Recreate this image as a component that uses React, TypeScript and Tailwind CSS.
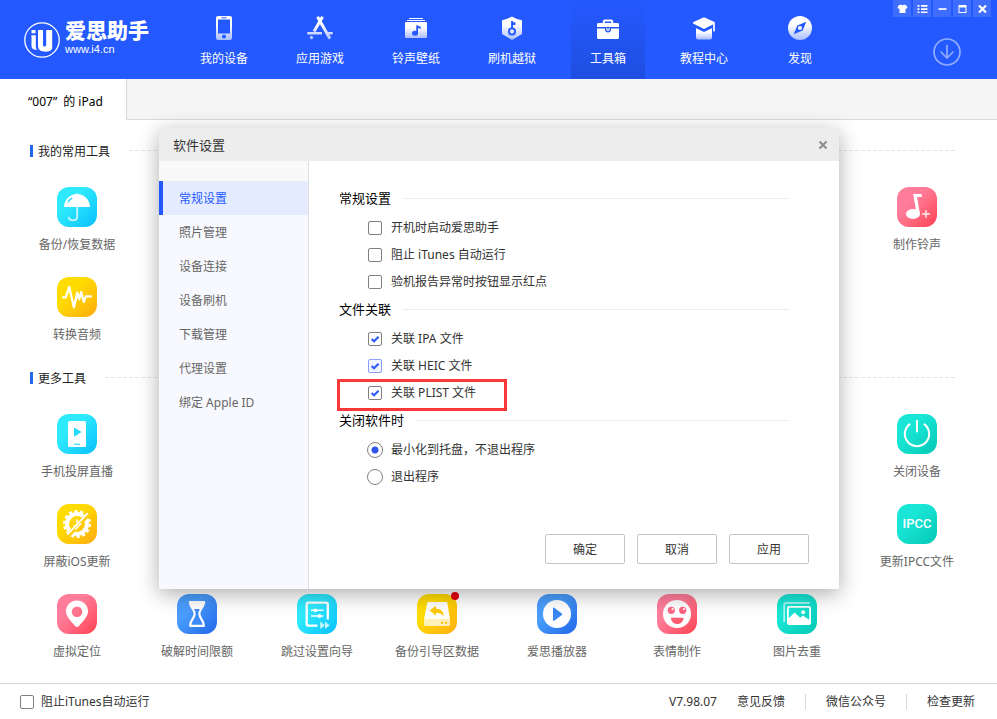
import type { InputHTMLAttributes, ReactNode } from "react";
import { clsx } from "clsx";

const BLUE = "#2459ff";

/* ---------- top navigation icons ---------- */

function NavGradient({ id }: { id: string }) {
  return (
    <defs>
      <linearGradient id={id} x1="0" y1="0" x2="0" y2="1">
        <stop offset="0.35" stopColor="#fff" />
        <stop offset="1" stopColor="#a9bdff" />
      </linearGradient>
    </defs>
  );
}

function DeviceIcon() {
  return (
    <svg width="16" height="24" viewBox="0 0 16 24">
      <NavGradient id="nav-device" />
      <rect width="16" height="24" rx="2" fill="url(#nav-device)" />
      <rect x="2" y="3.5" width="12" height="14" fill={BLUE} />
      <rect x="5.5" y="1.3" width="5" height="1" fill={BLUE} />
      <circle cx="8" cy="20.5" r="2" fill={BLUE} />
    </svg>
  );
}

function AppsIcon() {
  return (
    <svg width="26" height="24" viewBox="0 0 26 24" fill="none">
      <defs>
        <linearGradient id="nav-apps" gradientUnits="userSpaceOnUse" x1="0" y1="0" x2="0" y2="24">
          <stop offset="0.35" stopColor="#fff" />
          <stop offset="1" stopColor="#a9bdff" />
        </linearGradient>
      </defs>
      <g stroke="url(#nav-apps)" strokeWidth="3">
        <path d="M10.5 0.8 23 22.8" />
        <path d="M15.6 0.8 7 15.6" />
        <path d="M0.3 17.300H15M19.500 17.300h6.200" strokeWidth="2.600" />
        <path d="M5.200 20.300 3.700 22.800" />
      </g>
    </svg>
  );
}

function RingtoneNavIcon() {
  return (
    <svg width="22" height="24" viewBox="0 0 22 24">
      <NavGradient id="nav-ring" />
      <path d="M4 2h14v1H4zM2 4h18v1H2z" fill="#fff" />
      <rect y="6" width="22" height="16" rx="1" fill="url(#nav-ring)" />
      <ellipse cx="10" cy="17.2" rx="3" ry="2.5" fill={BLUE} />
      <path d="M11.3 9.2h1.6c.3 1 1.4 1.2 2.9 1.3v2.2c-1.3 0-2.2-.2-2.8-.7v5.2h-1.7z" fill={BLUE} />
    </svg>
  );
}

function FlashIcon() {
  return (
    <svg width="20" height="24" viewBox="0 0 20 24">
      <NavGradient id="nav-flash" />
      <path
        d="M10 .5c3 1.8 6 3 9.2 3.6.5.1.8.5.8 1v12.2c0 .6-.3 1-.8 1.300L10 23.900.8 18.600c-.5-.3-.8-.7-.8-1.300V5.100c0-.5.3-.9.8-1C4 3.500 7 2.300 10 .5z"
        fill="url(#nav-flash)"
      />
      <circle cx="10" cy="15.500" r="3.100" fill="none" stroke={BLUE} strokeWidth="1.900" />
      <path d="M9.100 5h1.900v1.200h2.400v2.700h-2.400V12H9.100z" fill={BLUE} />
    </svg>
  );
}

function ToolboxIcon() {
  return (
    <svg width="22" height="24" viewBox="0 0 22 24">
      <path d="M6.800 7.200V5.600c0-.7.5-1.200 1.200-1.200h6c.7 0 1.200.5 1.200 1.200v1.600" fill="none" stroke="#fff" strokeWidth="2" />
      <path d="M1.500 7h19c.8 0 1.500.7 1.500 1.500V11H0V8.500C0 7.700.7 7 1.500 7z" fill="#fff" />
      <path d="M0 12.600h8v1.200c0 1.500 1.300 2.700 3 2.700s3-1.200 3-2.700v-1.200h8v8.900c0 .8-.7 1.500-1.500 1.500h-19C.7 23 0 22.300 0 21.500z" fill="#fff" />
      <path d="M9.300 12h3.400v1.600c0 .9-.7 1.500-1.700 1.500s-1.700-.6-1.700-1.500z" fill="#fff" />
      <rect x="10.300" y="12.300" width="1.400" height="1.500" fill={BLUE} />
    </svg>
  );
}

function CourseIcon() {
  return (
    <svg width="22" height="24" viewBox="0 0 22 24">
      <NavGradient id="nav-course" />
      <path d="M3 12l8 3.600L19 12v9.500c0 1.200-.8 2-2 2H5c-1.200 0-2-.8-2-2z" fill="url(#nav-course)" />
      <path d="M3 10.300l8 4L19 10.300v1.800l-8 4-8-4z" fill={BLUE} />
      <path d="M11 1.300 21.500 6c.7.400.7 1.300 0 1.700L11 12.900.5 7.700c-.7-.4-.7-1.300 0-1.700z" fill="#fff" />
      <path d="M20 8.300 22 7.500V15c0 .700-2 .700-2 0z" fill="#dfe7ff" />
    </svg>
  );
}

function DiscoverIcon() {
  return (
    <svg width="24" height="24" viewBox="0 0 24 24">
      <NavGradient id="nav-discover" />
      <circle cx="12" cy="12" r="12" fill="url(#nav-discover)" />
      <path d="M18.300 5.800 14.600 14.500 5.700 18.200 9.400 9.500z" fill={BLUE} />
      <circle cx="12" cy="12" r="2" fill="#fff" />
    </svg>
  );
}

/* ---------- tool tile icons, drawn on a 40x40 grid ---------- */

function Glyph({ children }: { children: ReactNode }) {
  return (
    <svg width="40" height="40" viewBox="0 0 40 40" fill="#fff" aria-hidden="true">
      {children}
    </svg>
  );
}

const umbrella = (
  <Glyph>
    <path d="M7 20C7.300 13 12.500 7.500 19 7.100c.2-1 1.800-1 2 0C27.500 7.500 32.700 13 33 20z" />
    <path d="M20.200 20v9.600c0 2.300-1.500 3.800-4.100 3.800-2.300 0-3.700-1-4.300-2.700" fill="none" stroke="#fff" strokeOpacity=".75" strokeWidth="1.800" strokeLinecap="round" />
    <path d="M11.400 14.600c.8-1.400 1.800-2.400 3.300-3.200" fill="none" stroke="#27dffb" strokeWidth="1.600" strokeLinecap="round" />
  </Glyph>
);

const waveform = (
  <Glyph>
    <path d="M6 20.300h2.800L12.200 10l4.700 20.300L20.300 15.500l1.900 6.600 2-6.900 2.600 9.600 2-5.500H34" fill="none" stroke="#fff" strokeWidth="2.300" strokeLinecap="round" strokeLinejoin="round" />
  </Glyph>
);

const ringtone = (
  <Glyph>
    <ellipse cx="16" cy="27" rx="7" ry="5" />
    <path d="M16.200 7h8.600v3.100h-4.800L23 27h-3.400z" />
    <path d="M29 23.200v7.600M25.200 27h7.600" fill="none" stroke="#fff" strokeOpacity=".75" strokeWidth="1.800" />
  </Glyph>
);

const cast = (
  <Glyph>
    <rect x="11" y="7" width="18" height="26" rx="1.500" />
    <path d="M17 13.500v9.200l7.600-4.600z" fill="#1fdcfc" />
    <path d="M17 29.700h6v1.100h-6z" fill="#1fdcfc" />
  </Glyph>
);

const blockUpdate = (
  <Glyph>
    <circle cx="20" cy="20" r="9.900" fill="none" stroke="#fff" strokeWidth="4" />
    <circle cx="20" cy="20" r="12.700" fill="none" stroke="#fff" strokeWidth="2.600" strokeDasharray="3.100 2.600" />
    <path d="M19.200 15.500h1.800v5l-3.500 3.300-1.500-2.300 3.200-1.500z" />
    <path d="M33 8.300 9.500 33.200" stroke="#ffcd0d" strokeWidth="4.600" />
    <path d="M30.800 9.200 10.300 30.700" stroke="#fff" strokeWidth="1.800" />
    <path d="M24.300 19.200 18.300 25.400" stroke="#fff" strokeWidth="1.400" />
  </Glyph>
);

const power = (
  <Glyph>
    <path d="M13.200 9.800a12.200 12.200 0 1 0 13.600 0M20 6v12.300" fill="none" stroke="#fff" strokeWidth="2" />
  </Glyph>
);

const pin = (
  <Glyph>
    <path fillRule="evenodd" d="M20 6.400A11 11 0 0 0 9 17.300c0 5.600 5.600 10.700 9.300 14.900 1 1.100 2.400 1.100 3.400 0C25.400 28 31 22.900 31 17.300A11 11 0 0 0 20 6.400zm0 6a5.300 5.300 0 1 1 0 10.600 5.300 5.300 0 0 1 0-10.600z" />
  </Glyph>
);

const hourglass = (
  <Glyph>
    <path d="M13 7h14c.9 0 1.400.6 1.200 1.500-.8 5.100-4.700 7.800-4.700 11.100s3.500 6.100 4.400 11.300c.2 1.300-.3 2.100-1.400 2.100h-13c-1.100 0-1.600-.8-1.400-2.100.9-5.200 4.400-8 4.400-11.300S12.600 13.600 11.800 8.500C11.600 7.600 12.100 7 13 7z" />
    <path d="M17 15h6c-.8 1.500-1.700 2.800-1.700 4.600 0 4.100 3.300 6.600 4.300 11.200H14.400c1-4.600 4.300-7.100 4.300-11.200 0-1.800-.9-3.100-1.700-4.600z" fill="#3d8bf8" />
  </Glyph>
);

const skipSetup = (
  <Glyph>
    <path d="M20.500 31.700H11.300c-.9 0-1.600-.7-1.600-1.600V10.300c0-.9.7-1.600 1.600-1.600h17.900c.9 0 1.600.7 1.600 1.600v15.200" fill="none" stroke="#fff" strokeWidth="2.300" />
    <path d="M14 16.300h12.500M14 22h12.500" fill="none" stroke="#fff" strokeWidth="1.500" />
    <circle cx="18.300" cy="16.300" r="1.900" />
    <circle cx="22.500" cy="22" r="1.900" />
    <path d="M23.200 27.600 28 31.300v-3.700l4.700 3.700-4.700 3.600v-3.600L23.200 34.900z" fillOpacity=".75" />
  </Glyph>
);

const bootBackup = (
  <Glyph>
    <path d="M11.500 8h17.600c.8 0 1.200.4 1.300 1.100L33 25.400H7L10.200 9.100c.1-.7.500-1.100 1.300-1.100z" />
    <path d="M7 25.400h26v5.100c0 .9-.6 1.500-1.500 1.500h-23C7.600 32 7 31.400 7 30.500z" fillOpacity=".72" />
    <path d="M24 27.800h2v2h-2zM28.200 27.800h2v2h-2z" fill="#ffbd10" />
    <path d="M12.600 16.500 19 11.800v2.900c4.800 0 7.800 2.500 7.700 7.600-1.500-2.300-3.700-3.500-7.700-3.300v2.800z" fill="#ffcb08" />
  </Glyph>
);

const player = (
  <Glyph>
    <circle cx="20" cy="20" r="14" />
    <path d="M16 14.500c0-.8.600-1.100 1.200-.7l7.700 5.700c.6.400.6 1 0 1.400l-7.700 5.900c-.6.400-1.200.1-1.200-.7z" fill="#3a87f7" />
  </Glyph>
);

const smiley = (
  <Glyph>
    <circle cx="20" cy="20" r="14" />
    <circle cx="14.300" cy="16.300" r="3.600" fill="#ff6685" />
    <circle cx="25.700" cy="16.300" r="3.600" fill="#ff5f7b" />
    <circle cx="15.600" cy="15.100" r="1.100" />
    <circle cx="27" cy="15.100" r="1.100" />
    <path d="M14 23.700h12.500c0 3.700-2.500 6.300-6.200 6.300S14 27.400 14 23.700z" fill="#ff5a72" />
  </Glyph>
);

const pictures = (
  <Glyph>
    <path d="M7.200 28V11c0-1.300.9-2.200 2.200-2.200h23.300" fill="none" stroke="#fff" strokeOpacity=".65" strokeWidth="1.700" />
    <rect x="10.900" y="12.900" width="22.200" height="17.200" rx="1" fill="none" stroke="#fff" strokeWidth="1.800" />
    <circle cx="26.200" cy="18.200" r="2" />
    <path d="M11 25l6.500-6.500 5.700 5.300 2.600-2.300L33 26.300V30H11z" />
  </Glyph>
);

const ipcc = <span className="font-['Roboto',sans-serif] text-[13px] leading-10 font-medium text-white">IPCC</span>;

/* ---------- data ---------- */

const TONES = {
  cyan: "bg-linear-135 from-[#2eeafd] from-35% to-[#05bffc]",
  yellow: "bg-linear-135 from-[#ffdc00] from-35% to-[#ffab10]",
  pink: "bg-linear-135 from-[#ff7d9b] from-35% to-[#ff3c50]",
  blue: "bg-linear-135 from-[#4a9dfd] from-35% to-[#2165e6]",
  teal: "bg-linear-135 from-[#19e6d6] from-35% to-[#02c8b4]",
};

interface Tool {
  label: string;
  tone: keyof typeof TONES;
  icon: ReactNode;
  lastColumn?: boolean;
  badge?: boolean;
}

const favourites: Tool[] = [
  { label: "备份/恢复数据", tone: "cyan", icon: umbrella },
  { label: "制作铃声", tone: "pink", icon: ringtone, lastColumn: true },
  { label: "转换音频", tone: "yellow", icon: waveform },
];

const moreTools: Tool[] = [
  { label: "手机投屏直播", tone: "cyan", icon: cast },
  { label: "关闭设备", tone: "teal", icon: power, lastColumn: true },
  { label: "屏蔽iOS更新", tone: "yellow", icon: blockUpdate },
  { label: "更新IPCC文件", tone: "teal", icon: ipcc, lastColumn: true },
  { label: "虚拟定位", tone: "pink", icon: pin },
  { label: "破解时间限额", tone: "blue", icon: hourglass },
  { label: "跳过设置向导", tone: "cyan", icon: skipSetup },
  { label: "备份引导区数据", tone: "yellow", icon: bootBackup, badge: true },
  { label: "爱思播放器", tone: "blue", icon: player },
  { label: "表情制作", tone: "pink", icon: smiley },
  { label: "图片去重", tone: "teal", icon: pictures },
];

const navItems = [
  { label: "我的设备", icon: <DeviceIcon /> },
  { label: "应用游戏", icon: <AppsIcon /> },
  { label: "铃声壁纸", icon: <RingtoneNavIcon /> },
  { label: "刷机越狱", icon: <FlashIcon /> },
  { label: "工具箱", icon: <ToolboxIcon />, active: true },
  { label: "教程中心", icon: <CourseIcon /> },
  { label: "发现", icon: <DiscoverIcon /> },
];

const windowButtons = [
  { label: "皮肤", icon: <path d="M1.500 1.500 4 .5c.4.900 2.600.9 3 0l2.500 1L10.500 4l-2 .9V9h-6V4.900L.5 4z" fill="#fff" /> },
  { label: "菜单", icon: <path d="M.5 1h2v1.700h-2zM4 1h6.500v1.700H4zM.5 4.200h2v1.700h-2zM4 4.200h6.500v1.700H4zM.5 7.400h2v1.700h-2zM4 7.400h6.500v1.700H4z" fill="#fff" /> },
  { label: "最小化", icon: <path d="M1.500 4.200h8v1.700h-8z" fill="#fff" /> },
  { label: "最大化", icon: <path fillRule="evenodd" d="M1.500 1h8v8h-8zM2.500 3.500V8h6V3.500z" fill="#fff" /> },
  { label: "关闭", icon: <path d="m2 1.500 7 7m0-7-7 7" stroke="#fff" strokeWidth="2.200" /> },
];

const settingsTabs = ["常规设置", "照片管理", "设备连接", "设备刷机", "下载管理", "代理设置", "绑定 Apple ID"];

/* ---------- pieces ---------- */

function Logo() {
  return (
    <a href="#home" className="flex w-[187px] shrink-0 items-center gap-[5px] pl-6 text-white">
      <svg width="36" height="36" viewBox="0 0 36 36" fill="none" aria-hidden="true">
        <circle cx="18" cy="18" r="17.200" stroke="#fff" strokeWidth="1.300" />
        <path d="M7.500 8h4v3.300h-4z" fill="#fff" />
        <path d="M7.200 13.200h4.600v11.500c0 1.500.6 2.400 2 2.900-4 .6-6.300-.6-6.300-3.900v-8.600z" fill="#fff" />
        <path d="M14 8h5v14.500c0 1.400.5 2 1.500 2s1.700-.6 1.700-2V8h6v17.500c0 2.300-2 4.200-6 4.200-5.700 0-8.200-1.800-8.200-6.200z" fill="#fff" />
      </svg>
      <span className="flex flex-col pb-1 font-['Liberation_Sans','Noto_Sans_CJK_SC',sans-serif]">
        <span className="text-[21px] leading-6 font-black">爱思助手</span>
        <span className="text-[11px] leading-[13px]">www.i4.cn</span>
      </span>
    </a>
  );
}

function Header() {
  return (
    <header className="flex h-[79px] bg-[#2459ff]">
      <Logo />
      <nav className="flex gap-[22px]">
        {navItems.map((item) => (
          <a
            key={item.label}
            href="#nav"
            className={clsx(
              "flex w-[74px] flex-col items-center gap-[9px] pt-4 text-white",
              item.active && "bg-linear-to-b from-[#2459ff] to-[#1f4ee0]",
            )}
          >
            {item.icon}
            <span className="leading-5">{item.label}</span>
          </a>
        ))}
      </nav>
      <div className="ml-auto flex flex-col items-end pr-1.5">
        <div className="flex gap-0.5">
          {windowButtons.map((b) => (
            <button key={b.label} type="button" aria-label={b.label} className="flex h-[17px] w-[18px] items-center justify-center bg-[#3e6dff]">
              <svg width="11" height="10" viewBox="0 0 11 10">
                {b.icon}
              </svg>
            </button>
          ))}
        </div>
        <button type="button" aria-label="下载" className="mt-[21px] mr-[30px]">
          <svg width="28" height="28" viewBox="0 0 28 28" fill="none" stroke="#91acff" strokeWidth="1.700" strokeLinecap="round" strokeLinejoin="round">
            <circle cx="14" cy="14" r="13" />
            <path d="M14 7.500v12.300M8 14l6 6 6-6" />
          </svg>
        </button>
      </div>
    </header>
  );
}

function ToolSection({ title, tools }: { title: string; tools: Tool[] }) {
  return (
    <section>
      <div className="mr-[42px] ml-[30px] flex h-[18px] items-center">
        <span className="h-3 w-[3px] bg-[#2268e8]" />
        <h2 className="ml-[5px] pt-0.5 text-[#222]">{title}</h2>
        <span className="mb-px ml-[19px] h-px flex-1 bg-[repeating-linear-gradient(90deg,#e4e4e4_0_4px,transparent_4px_6px)]" />
      </div>
      <div className="mt-[27px] mr-5 ml-[17px] grid grid-cols-8 gap-y-[22px]">
        {tools.map((tool) => (
          <button
            key={tool.label}
            type="button"
            className={clsx("flex flex-col items-center gap-2 text-[#666]", tool.lastColumn && "col-start-8")}
          >
            <span className={clsx("relative flex size-10 items-center justify-center rounded-xl", TONES[tool.tone])}>
              {tool.icon}
              {tool.badge && <span className="absolute -top-0.5 -right-0.5 size-2 rounded-full bg-[#e60012]" />}
            </span>
            <span className="leading-5 whitespace-nowrap">{tool.label}</span>
          </button>
        ))}
      </div>
    </section>
  );
}

function Checkbox({ hovered, ...props }: InputHTMLAttributes<HTMLInputElement> & { hovered?: boolean }) {
  return (
    <span className="grid size-3.5">
      <input
        type="checkbox"
        className={clsx(
          "peer col-start-1 row-start-1 size-3.5 appearance-none rounded-xs border",
          hovered ? "border-[#8c9eff] bg-[#f3f5ff]" : "border-[#808080] bg-white",
        )}
        {...props}
      />
      <svg viewBox="0 0 14 14" className="pointer-events-none invisible col-start-1 row-start-1 size-3.5 peer-checked:visible">
        <path d="m3.600 7 2.400 2.200 4.600-4.400" fill="none" stroke="#2f5dfa" strokeWidth="2.200" />
      </svg>
    </span>
  );
}

function SettingGroup({ title, children }: { title: string; children: ReactNode }) {
  return (
    <fieldset>
      <legend className="flex h-[30px] w-full items-center gap-3 text-[13px] text-black">
        {title}
        <span className="mb-px h-px flex-1 bg-[#ececec]" />
      </legend>
      {children}
    </fieldset>
  );
}

function CheckRow({ label, checked, hovered, outlined }: { label: string; checked?: boolean; hovered?: boolean; outlined?: boolean }) {
  return (
    <div className="relative flex h-[27px] items-center pt-px pl-[29px]">
      <label className="flex items-center gap-[9px]">
        <Checkbox defaultChecked={checked} hovered={hovered} />
        {label}
      </label>
      {outlined && <span className="pointer-events-none absolute top-0 -left-0.5 h-8 w-[170px] border-3 border-[#fb3838]" />}
    </div>
  );
}

function RadioRow({ label, checked }: { label: string; checked?: boolean }) {
  return (
    <label className="flex h-[27px] items-center gap-2 pt-px pl-7">
      <input
        type="radio"
        name="on-close"
        defaultChecked={checked}
        className="size-4 appearance-none rounded-full border border-[#808080] checked:bg-[radial-gradient(circle,#2f55e8_3px,transparent_4px)]"
      />
      {label}
    </label>
  );
}

function SettingsDialog() {
  return (
    <div role="dialog" aria-label="软件设置" className="flex w-[680px] flex-col bg-white text-[#333] shadow-[0_5px_20px_rgba(0,0,0,0.32)]">
      <div className="flex h-[33px] items-center justify-between bg-[#ededed] pr-[11px] pl-3.5">
        <h1 className="pt-0.5 text-[13px]">软件设置</h1>
        <button type="button" aria-label="关闭设置">
          <svg width="10" height="10" viewBox="0 0 10 10" stroke="#8c8c8c" strokeWidth="2">
            <path d="m1.500 1.500 7 7m0-7-7 7" />
          </svg>
        </button>
      </div>
      <div className="flex">
        <div className="flex w-[150px] shrink-0 flex-col border-r border-[#dfdfe3] bg-[#f8f9fe]">
          <div className="h-5 bg-[#f9f9f9]" />
          {settingsTabs.map((tab, i) => (
            <button
              key={tab}
              type="button"
              className={clsx(
                "h-[34px] border-l-4 pt-0.5 pl-4 text-left",
                i === 0 ? "border-[#2459ff] bg-[#e6ecff] text-[#2459ff]" : "border-transparent text-[#666]",
              )}
            >
              {tab}
            </button>
          ))}
        </div>
        <form className="flex flex-1 flex-col pt-[23px] pb-[25px] pl-[30px]">
          <div className="mr-[50px]">
            <SettingGroup title="常规设置">
              <CheckRow label="开机时启动爱思助手" />
              <CheckRow label="阻止 iTunes 自动运行" />
              <CheckRow label="验机报告异常时按钮显示红点" />
            </SettingGroup>
            <SettingGroup title="文件关联">
              <CheckRow label="关联 IPA 文件" checked />
              <CheckRow label="关联 HEIC 文件" checked hovered />
              <CheckRow label="关联 PLIST 文件" checked outlined />
            </SettingGroup>
            <SettingGroup title="关闭软件时">
              <RadioRow label="最小化到托盘，不退出程序" checked />
              <RadioRow label="退出程序" />
            </SettingGroup>
          </div>
          <div className="mt-11 mr-[30px] flex justify-end gap-3">
            {["确定", "取消", "应用"].map((text) => (
              <button key={text} type="button" className="h-[30px] w-20 rounded-xs border border-[#c4c4c4] bg-white pt-0.5">
                {text}
              </button>
            ))}
          </div>
        </form>
      </div>
    </div>
  );
}

function Footer() {
  return (
    <footer className="flex h-9 items-center border-t border-[#d9d9d9] pr-[22px] pl-5 text-[#333]">
      <label className="flex items-center gap-[7px]">
        <Checkbox />
        阻止iTunes自动运行
      </label>
      <div className="ml-auto flex items-center gap-5">
        <span>V7.98.07</span>
        <a href="#feedback">意见反馈</a>
        <span className="h-4 w-px bg-[#d9d9d9]" />
        <a href="#wechat">微信公众号</a>
        <span className="h-4 w-px bg-[#d9d9d9]" />
        <a href="#update">检查更新</a>
      </div>
    </footer>
  );
}

export default function App() {
  return (
    <div className="relative flex min-h-screen flex-col bg-white font-['Noto_Sans','Noto_Sans_CJK_SC',sans-serif] text-xs">
      <Header />
      <div className="flex h-[41px] bg-[#f5f5f5]">
        <button type="button" className="flex w-[127px] items-center gap-1.5 border-r border-[#d9d9d9] bg-white pt-1 pl-7 text-black">
          <span>“007”</span>
          <span>的 iPad</span>
        </button>
        <div className="flex-1 border-b border-[#d9d9d9]" />
      </div>
      <main className="flex flex-1 flex-col gap-6 pt-[22px] pb-[21px]">
        <ToolSection title="我的常用工具" tools={favourites} />
        <ToolSection title="更多工具" tools={moreTools} />
      </main>
      <Footer />
      <div className="absolute inset-0 flex items-start justify-center pt-32 pl-px">
        <SettingsDialog />
      </div>
    </div>
  );
}
